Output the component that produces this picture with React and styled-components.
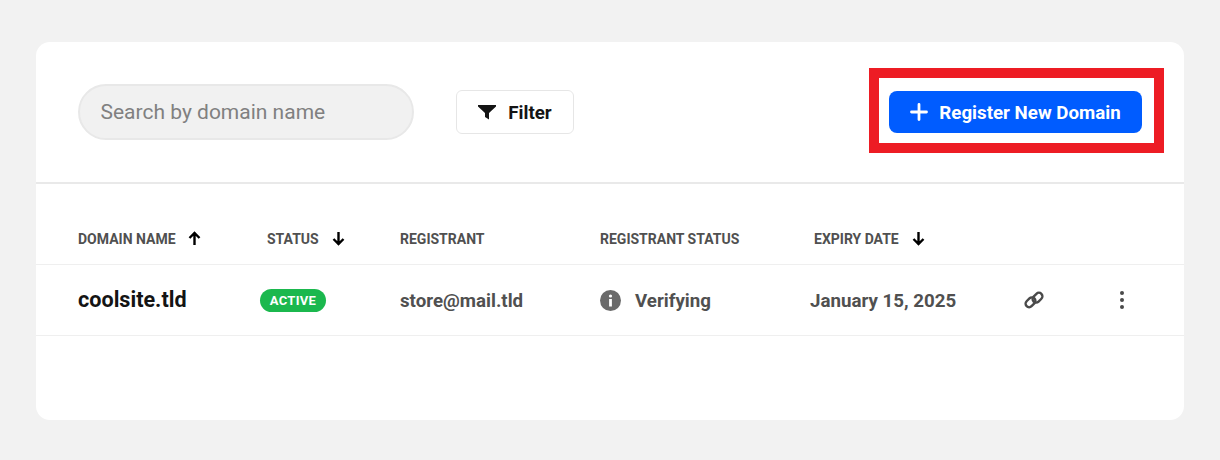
import React from "react";
import styled, { createGlobalStyle } from "styled-components";

const Global = createGlobalStyle`
  html, body { margin: 0; padding: 0; background: #f2f2f2; }
  body { font-family: Roboto, "Liberation Sans", sans-serif; }
`;
const Page = styled.div`
  width: 1220px; height: 460px; box-sizing: border-box; padding: 42px 36px 40px;
`;
const Card = styled.main`
  background: #fff; border-radius: 14px; height: 378px; overflow: hidden;
`;
const Toolbar = styled.div`
  height: 142px; box-sizing: border-box; border-bottom: 2px solid #e9e9e9;
  display: flex; align-items: flex-start; padding: 26px 20px 0 42px;
`;
const Search = styled.input`
  width: 336px; height: 56px; box-sizing: border-box; margin-top: 16px;
  border: 2px solid #e8e8e8; border-radius: 28px; background: #f1f1f1;
  padding: 0 21px 0 20.500px; font: 400 21px Roboto, sans-serif; color: #333; outline: none;
  &::placeholder { color: #808080; opacity: 1; }
`;
const FilterButton = styled.button`
  width: 118px; height: 44px; margin: 22px 0 0 42px; box-sizing: border-box;
  display: flex; align-items: center; justify-content: center; gap: 12px;
  background: #fff; border: 1px solid #e6e6e6; border-radius: 6px; padding: 0;
  font: 700 18.72px Roboto, sans-serif; color: #141414;
`;
const ButtonLabel = styled.span`
  padding-top: 2px;
`;
const Highlight = styled.div`
  margin-left: auto; width: 295px; height: 85px; box-sizing: border-box;
  border: 10px solid #ed1c24; padding: 13px 12px 10px 10px;
`;
const PrimaryButton = styled.button`
  width: 253px; height: 42px; box-sizing: border-box; border: 0; border-radius: 8px;
  background: #005cff; color: #fff; font: 700 18.72px Roboto, sans-serif;
  display: flex; align-items: center; justify-content: center; gap: 11px; padding: 0;
`;
const Row = styled.div`
  display: grid; grid-template-columns: 224px 140px 200px 210px 210px 99px 1fr;
  align-items: center; height: ${p => p.$h}px; box-sizing: border-box;
  border-bottom: 1px solid #efefef;
`;
const HeadRow = styled(Row)`margin-top: 39px; padding-bottom: 10px;`;
const HeadCell = styled.div`
  display: flex; align-items: center; gap: 12px; padding-left: ${p => p.$pad}px;
  font: 700 14px Roboto, sans-serif; color: #505050; white-space: nowrap;
`;
const DomainName = styled.div`
  padding-left: 42px; padding-bottom: 2px; font: 700 21.6px Roboto, sans-serif; color: #141414;
`;
const BadgeCell = styled.div`padding-left: 0;`;
const Badge = styled.span`
  display: inline-flex; align-items: center; justify-content: center;
  width: 66px; height: 23px; border-radius: 12px; background: #1bb84e; color: #fff;
  font: 700 13px Roboto, sans-serif; letter-spacing: .3px;
`;
const BodyCell = styled.div`
  display: flex; align-items: center; gap: 14px;
  font: 700 18.72px Roboto, sans-serif; color: #505050; white-space: nowrap;
`;
const BodyText = styled.span`
  padding-top: 2px;
`;
const IconCell = styled.div`
  display: flex; align-items: center; padding-left: ${p => p.$pad}px; color: #4f4f4f;
`;

const ArrowIcon = ({ up }) => (
  <svg width="15" height="15" viewBox="0 0 15 15" fill="none" stroke="#000" strokeWidth="2.400">
    {up ? <path d="M6.500 14V2M1.500 7l5-5 5 5" /> : <path d="M7.500 1v12M2.500 8l5 5 5-5" />}
  </svg>
);
const FilterIcon = () => (
  <svg width="18" height="16" viewBox="0 0 18 16"><path fill="#141414" d="M0 1h18v1.500L11 9v6.500L7 13V9L0 2.500z" /></svg>
);
const PlusIcon = () => (
  <svg width="18" height="18" viewBox="0 0 18 18" stroke="#fff" strokeWidth="2.800" strokeLinecap="round"><path d="M9 1.500v15M1.500 9h15" /></svg>
);
const InfoIcon = () => (
  <svg width="21" height="21" viewBox="0 0 21 21">
    <circle cx="10.500" cy="10.500" r="10.500" fill="#6a6a6a" />
    <circle cx="10.500" cy="6" r="1.600" fill="#fff" />
    <rect x="9.100" y="9" width="2.800" height="7.500" fill="#fff" />
  </svg>
);
const LinkIcon = () => (
  <svg width="20" height="20" viewBox="0 0 20 20" fill="none" stroke="#4a4a4a" strokeWidth="2.400">
    <rect x="1" y="8.800" width="11" height="7" rx="3.500" transform="rotate(-45 6.500 12.300)" />
    <rect x="8" y="4.200" width="11" height="7" rx="3.500" transform="rotate(-45 13.500 7.700)" />
  </svg>
);
const KebabIcon = () => (
  <svg width="6" height="18" viewBox="0 0 6 18" fill="#4a4a4a">
    <circle cx="3" cy="2" r="2" /><circle cx="3" cy="9" r="2" /><circle cx="3" cy="16" r="2" />
  </svg>
);

export default function App() {
  return (
    <>
      <Global />
      <Page>
        <Card>
          <Toolbar>
            <Search placeholder="Search by domain name" />
            <FilterButton><FilterIcon /><ButtonLabel>Filter</ButtonLabel></FilterButton>
            <Highlight>
              <PrimaryButton><PlusIcon /><ButtonLabel>Register New Domain</ButtonLabel></PrimaryButton>
            </Highlight>
          </Toolbar>
          <HeadRow $h={42}>
            <HeadCell $pad={42}>DOMAIN NAME <ArrowIcon up /></HeadCell>
            <HeadCell $pad={7}>STATUS <ArrowIcon /></HeadCell>
            <HeadCell $pad={0}>REGISTRANT</HeadCell>
            <HeadCell $pad={0}>REGISTRANT STATUS</HeadCell>
            <HeadCell $pad={4}>EXPIRY DATE <ArrowIcon /></HeadCell>
            <div /><div />
          </HeadRow>
          <Row $h={71}>
            <DomainName>coolsite.tld</DomainName>
            <BadgeCell><Badge>ACTIVE</Badge></BadgeCell>
            <BodyCell><BodyText>store@mail.tld</BodyText></BodyCell>
            <BodyCell><InfoIcon /><BodyText>Verifying</BodyText></BodyCell>
            <BodyCell><BodyText>January 15, 2025</BodyText></BodyCell>
            <IconCell $pad={4}><LinkIcon /></IconCell>
            <IconCell $pad={0}><KebabIcon /></IconCell>
          </Row>
        </Card>
      </Page>
    </>
  );
}
